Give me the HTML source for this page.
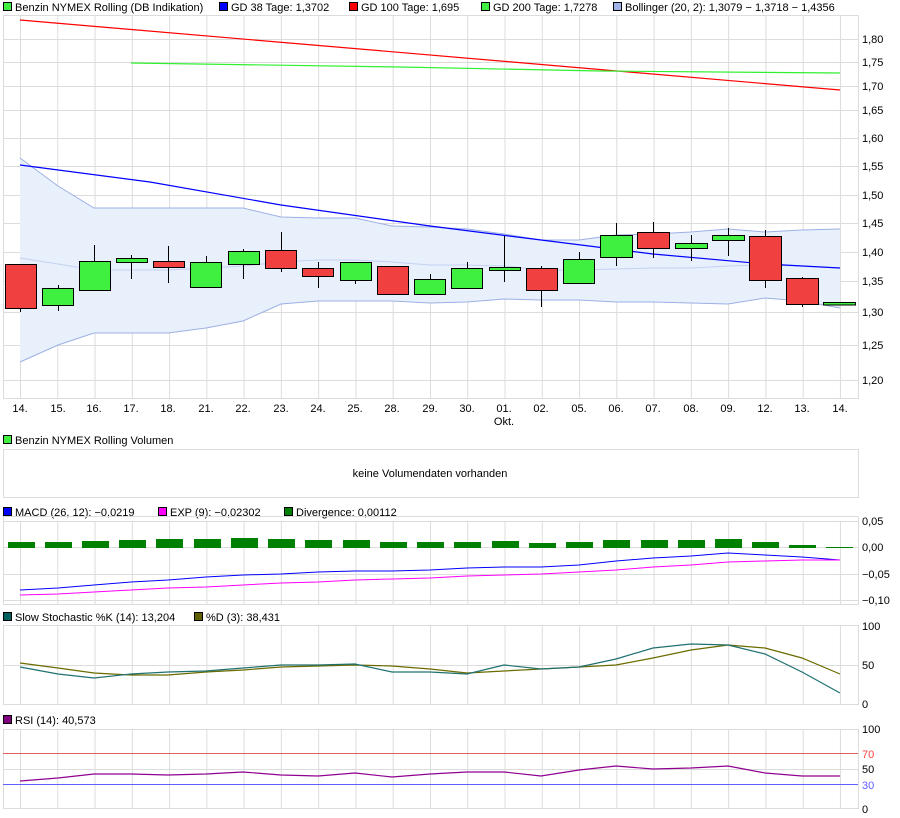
<!DOCTYPE html>
<html><head><meta charset="utf-8"><style>
html,body{margin:0;padding:0;background:#fff}
svg{display:block;font-family:"Liberation Sans",sans-serif;font-size:11px}
</style></head><body>
<svg width="900" height="818" viewBox="0 0 900 818" xmlns="http://www.w3.org/2000/svg">
<defs>
<pattern id="vg" x="20" y="0" width="37.27" height="818" patternUnits="userSpaceOnUse"><line x1="0.5" y1="0" x2="0.5" y2="818" stroke="#dcdcdc" stroke-width="1"/></pattern>
</defs>
<!-- Main legend -->
<g>
<rect x="3.5" y="2.5" width="8" height="8" fill="#40f040" stroke="#000"/><text x="15" y="11">Benzin NYMEX Rolling (DB Indikation)</text>
<rect x="219.5" y="2.5" width="8" height="8" fill="#0000ff" stroke="#000"/><text x="231" y="11">GD 38 Tage: 1,3702</text>
<rect x="349.5" y="2.5" width="8" height="8" fill="#ff0000" stroke="#000"/><text x="361" y="11">GD 100 Tage: 1,695</text>
<rect x="481.5" y="2.5" width="8" height="8" fill="#40f040" stroke="#000"/><text x="493" y="11">GD 200 Tage: 1,7278</text>
<rect x="613.5" y="2.5" width="8" height="8" fill="#a0b4e8" stroke="#000"/><text x="625" y="11">Bollinger (20, 2): 1,3079 − 1,3718 − 1,4356</text>
</g>
<!-- main panel -->
<rect x="3" y="15" width="855" height="383" fill="url(#vg)"/>
<g stroke="#dcdcdc">
<line x1="3" y1="39.5" x2="858" y2="39.5"/><line x1="3" y1="62.5" x2="858" y2="62.5"/><line x1="3" y1="86.5" x2="858" y2="86.5"/><line x1="3" y1="110.5" x2="858" y2="110.5"/><line x1="3" y1="138.5" x2="858" y2="138.5"/><line x1="3" y1="166.5" x2="858" y2="166.5"/><line x1="3" y1="195.5" x2="858" y2="195.5"/><line x1="3" y1="223.5" x2="858" y2="223.5"/><line x1="3" y1="252.5" x2="858" y2="252.5"/><line x1="3" y1="281.5" x2="858" y2="281.5"/><line x1="3" y1="312.5" x2="858" y2="312.5"/><line x1="3" y1="345.5" x2="858" y2="345.5"/><line x1="3" y1="380.5" x2="858" y2="380.5"/>
</g>
<polygon fill="#e8f0fc" stroke="none" points="20,158 58,186 94,208 131,208 168,208 206,208 243,208 281,217 318,218 355,218 392,226 430,227 467,229 504,234 541,240 579,240 616,235 653,234 691,232 728,229 765,232 802,230 840,229 840,308 802,301 765,298 728,304 691,303 653,302 616,302 579,300 541,300 504,299 467,302 430,303 392,301 355,301 318,301 281,304 243,321 206,328 168,333 131,333 94,333 58,345 20,362"/>
<polyline fill="none" stroke="#9db0e4" points="20,158 58,186 94,208 131,208 168,208 206,208 243,208 281,217 318,218 355,218 392,226 430,227 467,229 504,234 541,240 579,240 616,235 653,234 691,232 728,229 765,232 802,230 840,229"/>
<polyline fill="none" stroke="#9db0e4" points="20,362 58,345 94,333 131,333 168,333 206,328 243,321 281,304 318,301 355,301 392,301 430,303 467,302 504,299 541,300 579,300 616,302 653,302 691,303 728,304 765,298 802,301 840,308"/>
<polyline fill="none" stroke="#c4d2f2" points="20,258 58,264 94,270 131,270 168,270 206,268 243,266 281,262 318,260 355,260 392,262 430,265 467,265 504,266 541,270 579,270 616,269 653,268 691,268 728,266 765,265 802,266 840,268"/>
<polyline fill="none" stroke="#ff0000" stroke-width="1.2" points="20,20 840,90"/>
<polyline fill="none" stroke="#30f030" stroke-width="1.2" points="131,63 400,67 600,71 840,73"/>
<polyline fill="none" stroke="#0000ff" stroke-width="1.2" points="20,165 150,182 281,205 430,226 541,240 653,254 765,264 840,268"/>
<!-- candles -->
<g stroke="#000" stroke-width="1">
<line x1="20.5" y1="264" x2="20.5" y2="312"/><rect x="5.5" y="264.5" width="31" height="44" fill="#f04040"/>
<line x1="58.5" y1="285" x2="58.5" y2="311"/><rect x="42.5" y="288.5" width="31" height="17" fill="#40f040"/>
<line x1="94.5" y1="245" x2="94.5" y2="290"/><rect x="79.5" y="261.5" width="31" height="29" fill="#40f040"/>
<line x1="131.5" y1="255" x2="131.5" y2="279"/><rect x="116.5" y="258.5" width="31" height="4" fill="#40f040"/>
<line x1="168.5" y1="246" x2="168.5" y2="283"/><rect x="153.5" y="261.5" width="31" height="6" fill="#f04040"/>
<line x1="206.5" y1="256" x2="206.5" y2="287"/><rect x="190.5" y="262.5" width="31" height="25" fill="#40f040"/>
<line x1="243.5" y1="249" x2="243.5" y2="279"/><rect x="228.5" y="251.5" width="31" height="13" fill="#40f040"/>
<line x1="281.5" y1="232" x2="281.5" y2="272"/><rect x="265.5" y="250.5" width="31" height="18" fill="#f04040"/>
<line x1="318.5" y1="262" x2="318.5" y2="288"/><rect x="302.5" y="268.5" width="31" height="8" fill="#f04040"/>
<line x1="355.5" y1="262" x2="355.5" y2="284"/><rect x="340.5" y="262.5" width="31" height="18" fill="#40f040"/>
<line x1="392.5" y1="266" x2="392.5" y2="295"/><rect x="377.5" y="266.5" width="31" height="28" fill="#f04040"/>
<line x1="430.5" y1="274" x2="430.5" y2="294"/><rect x="414.5" y="279.5" width="31" height="15" fill="#40f040"/>
<line x1="467.5" y1="262" x2="467.5" y2="288"/><rect x="451.5" y="268.5" width="31" height="20" fill="#40f040"/>
<line x1="504.5" y1="236" x2="504.5" y2="282"/><rect x="489.5" y="267.5" width="31" height="3" fill="#40f040"/>
<line x1="541.5" y1="266" x2="541.5" y2="307"/><rect x="526.5" y="268.5" width="31" height="22" fill="#f04040"/>
<line x1="579.5" y1="252" x2="579.5" y2="284"/><rect x="563.5" y="259.5" width="31" height="24" fill="#40f040"/>
<line x1="616.5" y1="223" x2="616.5" y2="266"/><rect x="600.5" y="235.5" width="32" height="22" fill="#40f040"/>
<line x1="653.5" y1="222" x2="653.5" y2="258"/><rect x="637.5" y="232.5" width="32" height="16" fill="#f04040"/>
<line x1="691.5" y1="235" x2="691.5" y2="261"/><rect x="675.5" y="243.5" width="32" height="5" fill="#40f040"/>
<line x1="728.5" y1="228" x2="728.5" y2="256"/><rect x="712.5" y="235.5" width="32" height="5" fill="#40f040"/>
<line x1="765.5" y1="230" x2="765.5" y2="288"/><rect x="749.5" y="236.5" width="32" height="44" fill="#f04040"/>
<line x1="802.5" y1="277" x2="802.5" y2="307"/><rect x="786.5" y="278.5" width="32" height="26" fill="#f04040"/>
<rect x="823.5" y="302.5" width="32" height="2.5" fill="#40f040"/>
</g>
<rect x="3.5" y="15.5" width="855" height="383" fill="none" stroke="#dcdcdc"/>
<g fill="#000">
<text x="862" y="43">1,80</text><text x="862" y="90">1,70</text><text x="862" y="66">1,75</text><text x="862" y="114">1,65</text><text x="862" y="142">1,60</text><text x="862" y="170">1,55</text><text x="862" y="199">1,50</text><text x="862" y="227">1,45</text><text x="862" y="256">1,40</text><text x="862" y="285">1,35</text><text x="862" y="316">1,30</text><text x="862" y="349">1,25</text><text x="862" y="384">1,20</text>
</g>
<g text-anchor="middle">
<text x="20" y="412">14.</text><text x="58" y="412">15.</text><text x="94" y="412">16.</text><text x="131" y="412">17.</text><text x="168" y="412">18.</text><text x="206" y="412">21.</text><text x="243" y="412">22.</text><text x="281" y="412">23.</text><text x="318" y="412">24.</text><text x="355" y="412">25.</text><text x="392" y="412">28.</text><text x="430" y="412">29.</text><text x="467" y="412">30.</text><text x="504" y="412">01.</text><text x="504" y="425">Okt.</text><text x="541" y="412">02.</text><text x="579" y="412">05.</text><text x="616" y="412">06.</text><text x="653" y="412">07.</text><text x="691" y="412">08.</text><text x="728" y="412">09.</text><text x="765" y="412">12.</text><text x="802" y="412">13.</text><text x="840" y="412">14.</text>
</g>
<!-- Volume -->
<rect x="3.5" y="435.5" width="8" height="8" fill="#40f040" stroke="#000"/><text x="15" y="444">Benzin NYMEX Rolling Volumen</text>
<rect x="3.5" y="449.5" width="855" height="48" fill="#fff" stroke="#dcdcdc"/>
<text x="430" y="477" text-anchor="middle">keine Volumendaten vorhanden</text>
<!-- MACD -->
<rect x="3.5" y="507.5" width="8" height="8" fill="#0000ff" stroke="#000"/><text x="15" y="516">MACD (26, 12): −0,0219</text>
<rect x="158.5" y="507.5" width="8" height="8" fill="#ff00ff" stroke="#000"/><text x="170" y="516">EXP (9): −0,02302</text>
<rect x="284.5" y="507.5" width="8" height="8" fill="#008000" stroke="#000"/><text x="296" y="516">Divergence: 0,00112</text>
<rect x="3" y="521" width="855" height="83" fill="url(#vg)"/>
<g stroke="#dcdcdc"><line x1="3" y1="521.5" x2="858" y2="521.5"/><line x1="3" y1="547.5" x2="858" y2="547.5"/><line x1="3" y1="574.5" x2="858" y2="574.5"/><line x1="3" y1="600.5" x2="858" y2="600.5"/></g>
<g fill="#008000">
<rect x="8" y="542" width="27" height="6"/><rect x="45" y="542" width="27" height="6"/><rect x="82" y="541" width="27" height="7"/><rect x="119" y="540" width="27" height="8"/><rect x="156" y="539" width="27" height="9"/><rect x="194" y="539" width="27" height="9"/><rect x="231" y="538" width="27" height="10"/><rect x="268" y="539" width="27" height="9"/><rect x="305" y="540" width="27" height="8"/><rect x="343" y="540" width="27" height="8"/><rect x="380" y="542" width="27" height="6"/><rect x="417" y="542" width="27" height="6"/><rect x="454" y="542" width="27" height="6"/><rect x="492" y="541" width="27" height="7"/><rect x="529" y="543" width="27" height="5"/><rect x="566" y="542" width="27" height="6"/><rect x="603" y="540" width="27" height="8"/><rect x="641" y="540" width="27" height="8"/><rect x="678" y="540" width="27" height="8"/><rect x="715" y="539" width="27" height="9"/><rect x="752" y="542" width="27" height="6"/><rect x="789" y="545" width="27" height="3"/><rect x="826" y="547" width="27" height="1"/>
</g>
<polyline fill="none" stroke="#0000ff" points="20,590 58,588 94,585 131,582 168,580 206,577 243,575 281,574 318,572 355,571 392,571 430,570 467,568 504,567 541,567 579,565 616,561 653,558 691,556 728,553 765,555 802,557 840,560"/>
<polyline fill="none" stroke="#ff00ff" points="20,595 58,594 94,592 131,590 168,588 206,587 243,585 281,583 318,582 355,580 392,579 430,578 467,576 504,575 541,574 579,572 616,570 653,567 691,565 728,562 765,561 802,560 840,560"/>
<rect x="3.5" y="516.5" width="855" height="88" fill="none" stroke="#dcdcdc"/>
<text x="862" y="525">0,05</text><text x="862" y="551">0,00</text><text x="862" y="578">−0,05</text><text x="862" y="604">−0,10</text>
<!-- Stochastic -->
<rect x="3.5" y="612.5" width="8" height="8" fill="#006060" stroke="#000"/><text x="15" y="621">Slow Stochastic %K (14): 13,204</text>
<rect x="194.5" y="612.5" width="8" height="8" fill="#606000" stroke="#000"/><text x="206" y="621">%D (3): 38,431</text>
<rect x="3" y="625" width="855" height="80" fill="url(#vg)"/>
<g stroke="#dcdcdc"><line x1="3" y1="665.5" x2="858" y2="665.5"/></g>
<rect x="3.5" y="625.5" width="855" height="79" fill="none" stroke="#dcdcdc"/>
<polyline fill="none" stroke="#6b6b00" stroke-width="1.2" points="20,663 58,668 94,673 131,675 168,675 206,672 243,670 281,667 318,666 355,665 392,666 430,669 467,673 504,671 541,669 579,667 616,665 653,658 691,650 728,645 765,648 802,658 840,674"/>
<polyline fill="none" stroke="#207070" stroke-width="1.2" points="20,667 58,674 94,678 131,674 168,672 206,671 243,668 281,665 318,665 355,664 392,672 430,672 467,674 504,665 541,669 579,667 616,659 653,648 691,644 728,645 765,654 802,672 840,693"/>
<text x="862" y="630">100</text><text x="862" y="669">50</text><text x="862" y="708">0</text>
<!-- RSI -->
<rect x="3.5" y="715.5" width="8" height="8" fill="#800080" stroke="#000"/><text x="15" y="724">RSI (14): 40,573</text>
<rect x="3" y="729" width="855" height="80" fill="url(#vg)"/>
<g stroke="#dcdcdc"><line x1="3" y1="769.5" x2="858" y2="769.5"/></g>
<rect x="3.5" y="729.5" width="855" height="79" fill="none" stroke="#dcdcdc"/>
<line x1="3" y1="753.5" x2="858" y2="753.5" stroke="#e06060"/>
<line x1="3" y1="784.5" x2="858" y2="784.5" stroke="#6060ff"/>
<polyline fill="none" stroke="#900090" stroke-width="1.2" points="20,781 58,778 94,774 131,774 168,775 206,774 243,772 281,775 318,776 355,773 392,777 430,774 467,772 504,772 541,776 579,770 616,766 653,769 691,768 728,766 765,773 802,776 840,776"/>
<text x="862" y="733">100</text><text x="862" y="758" fill="#ff4040">70</text><text x="862" y="773">50</text><text x="862" y="789" fill="#6060ff">30</text><text x="862" y="813">0</text>
</svg>
</body></html>
